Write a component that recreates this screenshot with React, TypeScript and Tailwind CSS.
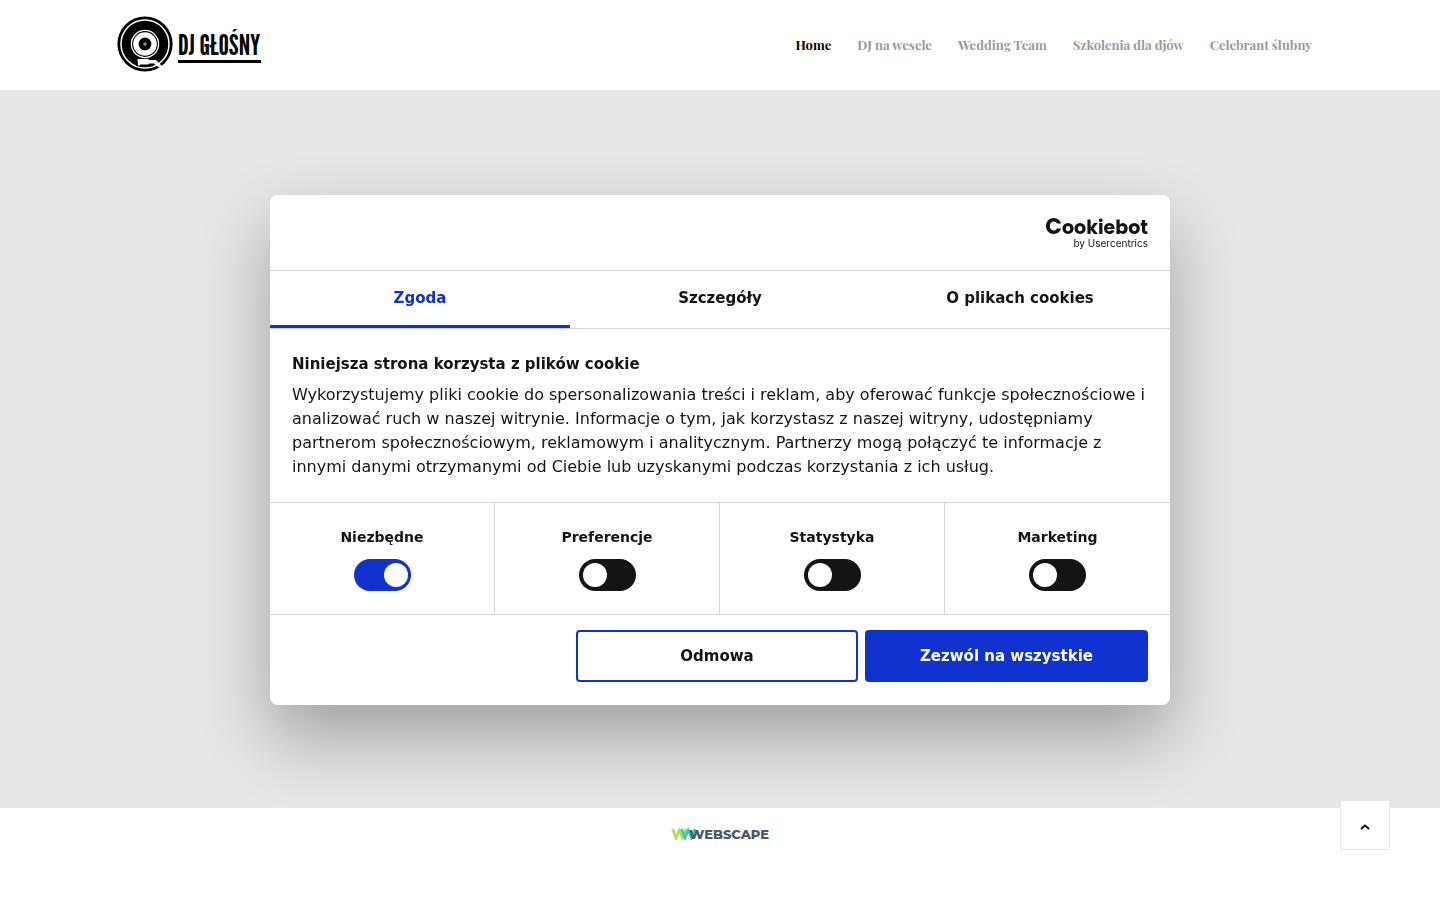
import { useState } from "react";

const navItems = ["Home", "DJ na wesele", "Wedding Team", "Szkolenia dla djów", "Celebrant ślubny"];
const tabs = ["Zgoda", "Szczegóły", "O plikach cookies"];
const categories = ["Niezbędne", "Preferencje", "Statystyka", "Marketing"];

function VinylLogo() {
  return (
    <svg viewBox="0 0 56 56" className="size-14 shrink-0" aria-hidden="true">
      <circle cx="28" cy="28" r="27.6" fill="#000" />
      <circle cx="28" cy="28" r="24" fill="none" stroke="#fff" strokeWidth="1.5" />
      <circle cx="28" cy="28" r="14.2" fill="#fff" />
      <circle cx="28" cy="28" r="12.9" fill="#000" />
      <circle cx="28" cy="28" r="11.8" fill="#fff" />
      <circle cx="28" cy="28" r="6.4" fill="#000" />
      <circle cx="28" cy="28" r="1.5" fill="#fff" />
      <circle cx="28" cy="28" r="0.8" fill="#000" />
      <path d="M20.5 43 H31 L32.5 44 H38 L44.5 50 L42.5 52 L37 47.5 H32.5 L31 48.5 H23 V49.5 H21 Z" fill="#fff" />
      <path d="M38 44.5 L46 52.5" stroke="#fff" strokeWidth="2" />
    </svg>
  );
}

function CookiebotLogo() {
  return (
    <div className="flex flex-col items-end text-[#141414]" aria-label="Cookiebot by Usercentrics">
      <div className="flex h-5 items-baseline font-['Poppins','Lato',sans-serif] text-[19px] leading-5 font-bold">
        <span className="text-[22px] leading-5">C</span>
        <span>ookiebot</span>
      </div>
      <span className="font-['Inter',sans-serif] text-[10px] leading-3">by Usercentrics</span>
    </div>
  );
}

function WebscapeLogo() {
  return (
    <a
      href="#webscape"
      className="flex items-center font-['Montserrat','Inter',sans-serif] text-[13px] leading-4 font-extrabold text-[#4b5a66]"
    >
      <svg viewBox="0 0 26 12" className="-mr-2 h-3 w-[26px]" aria-hidden="true" fill="none" strokeWidth="2.6">
        <path d="M1.5 1 L5 10 L8.2 2 L11.5 10 L15 1" stroke="#a4e64a" />
        <path d="M10.5 1 L14 10 L17.2 2 L20.5 10 L24 1" stroke="#3fc4c4" />
      </svg>
      <span className="relative">WEBSCAPE</span>
    </a>
  );
}

function ConsentDialog() {
  const [active, setActive] = useState(0);
  return (
    <div className="fixed inset-0 flex items-center justify-center p-4">
      <section
        role="dialog"
        aria-label="Zgoda na pliki cookie"
        className="w-full max-w-[900px] rounded-lg bg-white font-['DejaVu_Sans',sans-serif] text-[15px] text-[#141414] shadow-[0_32px_68px_rgba(0,0,0,0.3)]"
      >
        <div className="flex justify-end border-b border-[#d6d6d6] px-[22px] pt-[22px] pb-[21px]">
          <CookiebotLogo />
        </div>
        <div role="tablist" className="grid grid-cols-3 border-b border-[#d6d6d6]">
          {tabs.map((tab, i) => (
            <button
              key={tab}
              role="tab"
              aria-selected={i === active}
              onClick={() => setActive(i)}
              className={
                i === active
                  ? "border-b-3 border-[#1032cf] pt-[15px] pb-[15px] leading-6 font-bold text-[#1032cf]"
                  : "border-b-3 border-transparent pt-[15px] pb-[15px] leading-6 font-bold"
              }
            >
              {tab}
            </button>
          ))}
        </div>
        <div className="px-[22px] pt-[23px] pb-[23px]">
          <h2 className="leading-6 font-bold">Niniejsza strona korzysta z plików cookie</h2>
          <p className="mt-[7px] text-base leading-6">
            Wykorzystujemy pliki cookie do spersonalizowania treści i reklam, aby oferować funkcje społecznościowe i
            analizować ruch w naszej witrynie. Informacje o tym, jak korzystasz z naszej witryny, udostępniamy
            partnerom społecznościowym, reklamowym i analitycznym. Partnerzy mogą połączyć te informacje z innymi
            danymi otrzymanymi od Ciebie lub uzyskanymi podczas korzystania z ich usług.
          </p>
        </div>
        <div className="grid grid-cols-4 divide-x divide-[#d6d6d6] border-y border-[#d6d6d6]">
          {categories.map((name, i) => (
            <label key={name} className="flex flex-col items-center gap-3 pt-6 pb-[23px] text-sm leading-5 font-bold">
              {name}
              <input
                type="checkbox"
                defaultChecked={i === 0}
                disabled={i === 0}
                className="h-8 w-[57px] appearance-none rounded-full bg-[#141414] p-1 before:block before:size-6 before:rounded-full before:bg-white checked:bg-[#1032cf] checked:before:ml-[26px]"
              />
            </label>
          ))}
        </div>
        <div className="flex justify-end gap-[7px] px-[22px] pt-[15px] pb-[23px]">
          <button className="h-[52px] w-[282px] rounded border-2 border-[#1032cf] font-bold">Odmowa</button>
          <button className="h-[52px] w-[283px] rounded bg-[#1032cf] font-bold text-white">Zezwól na wszystkie</button>
        </div>
      </section>
    </div>
  );
}

export default function App() {
  return (
    <div className="flex min-h-screen flex-col bg-white">
      <header className="flex h-[90px] items-center justify-between pr-32 pl-[117px]">
        <a href="#home" className="-mt-[3px] flex items-center gap-[5px] text-black" aria-label="DJ Głośny">
          <VinylLogo />
          <span className="border-b-3 border-black pt-[5px] font-['League_Gothic','Bebas_Neue','Oswald','Liberation_Sans',sans-serif] text-[29px] leading-[30px] font-normal">
            DJ GŁOŚNY
          </span>
        </a>
        <nav className="flex gap-[26px] font-['Playfair_Display','Liberation_Serif',serif] text-[13px] leading-5 font-bold">
          {navItems.map((item, i) => (
            <a key={item} href="#menu" className={i === 0 ? "text-black" : "text-[#999]"}>
              {item}
            </a>
          ))}
        </nav>
      </header>
      <main className="flex-1 bg-[#e6e6e6]" />
      <footer className="flex h-[92px] items-start justify-center pt-[18px]">
        <WebscapeLogo />
      </footer>
      <ConsentDialog />
      <button
        aria-label="Do góry"
        className="fixed right-[50px] bottom-[50px] flex size-[50px] items-center justify-center rounded-xs border border-[#e6e6e6] bg-white"
      >
        <svg viewBox="0 0 10 6" className="mt-1 h-1.5 w-2.5" fill="none" stroke="#000" strokeWidth="1.8" aria-hidden="true">
          <path d="M1 5 L5 1.4 L9 5" />
        </svg>
      </button>
    </div>
  );
}
